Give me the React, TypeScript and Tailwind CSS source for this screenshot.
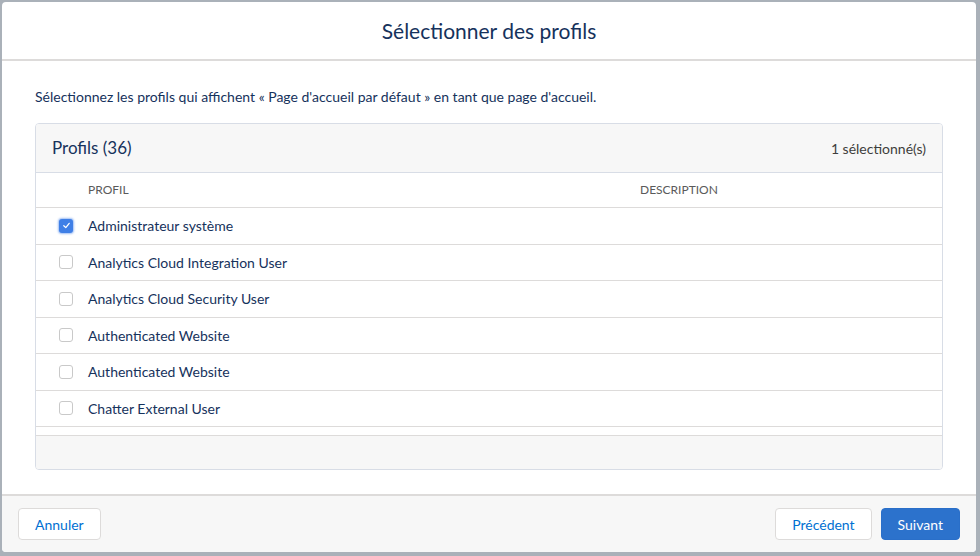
import React from "react";

const rows = [
  { name: "Administrateur système", checked: true },
  { name: "Analytics Cloud Integration User", checked: false },
  { name: "Analytics Cloud Security User", checked: false },
  { name: "Authenticated Website", checked: false },
  { name: "Authenticated Website", checked: false },
  { name: "Chatter External User", checked: false },
];

function Checkbox({ checked }: { checked: boolean }) {
  if (checked) {
    return (
      <span className="flex h-[14px] w-[14px] items-center justify-center rounded-[3px] bg-[#3f7fe6] shadow-[0_0_2px_1px_rgba(40,110,230,0.45)]">
        <svg width="9" height="9" viewBox="0 0 10 10" fill="none">
          <path d="M2 5.3 L4.2 7.4 L8 2.6" stroke="white" strokeWidth="1.4" strokeLinecap="round" strokeLinejoin="round" />
        </svg>
      </span>
    );
  }
  return <span className="block h-[14px] w-[14px] rounded-[3px] border border-[#c9c9c9] bg-white" />;
}

export default function App() {
  return (
    <div
      className="h-[556px] w-[980px] overflow-hidden bg-[#aab1b9] pl-[2px] pt-[2px]"
      style={{ fontFamily: "Lato, 'Open Sans', sans-serif" }}
    >
      <div className="flex h-[550px] w-[974px] flex-col overflow-hidden rounded-[4px] bg-white">
        {/* Header */}
        <div className="flex h-[59px] shrink-0 items-center justify-center border-b-2 border-[#dddbda]">
          <h1 className="text-[21px] font-normal text-[#16325c]">Sélectionner des profils</h1>
        </div>

        {/* Body */}
        <div className="flex flex-1 flex-col px-[33px] pt-[27px]">
          <p className="text-[14px] leading-[17px] text-[#16325c]">
            Sélectionnez les profils qui affichent « Page d'accueil par défaut » en tant que page d'accueil.
          </p>
          <div className="mt-[18px] flex h-[347px] flex-col overflow-hidden rounded-[4px] border border-[#d8dde6] bg-white">
            <div className="flex h-[49px] shrink-0 items-center justify-between border-b border-[#d8dde6] bg-[#f7f7f7] pl-[16px] pr-[16px]">
              <span className="text-[17px] font-normal text-[#16325c]">Profils (36)</span>
              <span className="text-[14px] text-[#3e3e3c]">1 sélectionné(s)</span>
            </div>
            <div className="flex h-[35px] shrink-0 items-center border-b border-[#dddbda] text-[12px] text-[#5a5a5a]">
              <span className="w-[604px] pl-[52px]">PROFIL</span>
              <span>DESCRIPTION</span>
            </div>
            {rows.map((r, i) => (
              <div
                key={i}
                className="flex h-[36.5px] shrink-0 items-center border-b border-[#dddbda] text-[14px] text-[#16325c]"
              >
                <span className="flex w-[52px] justify-center pl-[8px]">
                  <Checkbox checked={r.checked} />
                </span>
                <span>{r.name}</span>
              </div>
            ))}
            <div className="h-[9px] shrink-0 border-b border-[#dddbda]" />
            <div className="flex-1 bg-[#f7f7f7]" />
          </div>
        </div>

        {/* Footer */}
        <div className="flex h-[58px] shrink-0 items-center justify-between border-t-2 border-[#dddbda] bg-[#f7f7f7] px-[16px]">
          <button className="h-[32px] rounded-[4px] border border-[#dddbda] bg-white px-[16px] text-[14px] text-[#0070d2]">
            Annuler
          </button>
          <div className="flex gap-[9px]">
            <button className="h-[32px] rounded-[4px] border border-[#dddbda] bg-white px-[16px] text-[14px] text-[#0070d2]">
              Précédent
            </button>
            <button className="h-[32px] rounded-[4px] border border-[#2a6fc9] bg-[#2c72cc] px-[16px] text-[14px] text-white">
              Suivant
            </button>
          </div>
        </div>
      </div>
    </div>
  );
}
